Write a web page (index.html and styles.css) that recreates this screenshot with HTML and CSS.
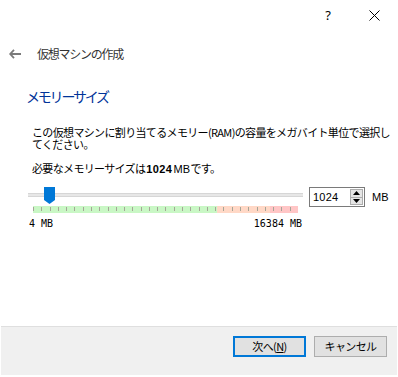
FILE: index.html
```html
<!DOCTYPE html>
<html lang="ja">
<head>
<meta charset="utf-8">
<title>仮想マシンの作成</title>
<link rel="stylesheet" href="styles.css">
</head>
<body>
<div class="window">
  <div class="titlebar">
    <button class="cap-btn help">?</button>
    <button class="cap-btn close" aria-label="閉じる">
      <svg width="11" height="11" viewBox="0 0 11 11"><path d="M0.5 0.5L10.5 10.5M10.5 0.5L0.5 10.5" stroke="#000" stroke-width="1" fill="none"/></svg>
    </button>
  </div>
  <div class="nav">
    <svg class="back" width="12" height="10" viewBox="0 0 12 10"><path d="M5 0.8L1.2 5L5 9.2M1.2 5H12" stroke="#7a7a7a" stroke-width="1.8" fill="none"/></svg>
    <span class="nav-title">仮想マシンの作成</span>
  </div>
  <main class="content">
    <h1 class="heading">メモリーサイズ</h1>
    <p class="desc">この仮想マシンに割り当てるメモリー(RAM)の容量をメガバイト単位で選択し<br>てください。</p>
    <p class="desc need">必要なメモリーサイズは<b>1024</b><span class="latin">MB</span>です。</p>
    <div class="slider-row">
      <div class="slider">
        <div class="track-wrap">
          <div class="track"></div>
          <svg class="thumb" width="11" height="17" viewBox="0 0 11 17"><path d="M0 0H11V13L5.5 17L0 13Z" fill="#0078d7"/></svg>
        </div>
        <div class="ticks"></div>
        <div class="scale-labels"><span>4 MB</span><span>16384 MB</span></div>
      </div>
      <div class="spin">
        <span class="spin-value">1024</span>
        <div class="spin-btns">
          <span class="spin-btn"><svg width="7" height="4" viewBox="0 0 7 4"><path d="M0 4L3.5 0L7 4Z" fill="#000"/></svg></span>
          <span class="spin-btn"><svg width="7" height="4" viewBox="0 0 7 4"><path d="M0 0L3.5 4L7 0Z" fill="#000"/></svg></span>
        </div>
      </div>
      <span class="unit">MB</span>
    </div>
  </main>
  <footer class="footer">
    <button class="btn primary">次へ(<u>N</u>)</button>
    <button class="btn">キャンセル</button>
  </footer>
</div>
</body>
</html>
```
FILE: styles.css
```css
html, body {
  margin: 0;
  padding: 0;
  background: #ffffff;
}
body {
  width: 398px;
  height: 377px;
  overflow: hidden;
  font-family: "Noto Sans CJK JP", "Noto Sans", sans-serif;
  color: #000;
}
.window {
  height: 377px;
  display: flex;
  flex-direction: column;
}
.titlebar {
  height: 30px;
  display: flex;
  justify-content: flex-end;
  padding-right: 1px;
}
.cap-btn {
  width: 46px;
  height: 30px;
  border: 0;
  background: transparent;
  padding: 0;
  margin: 0;
  display: flex;
  align-items: center;
  justify-content: center;
  font-family: "Noto Sans", sans-serif;
  font-size: 13px;
  color: #000;
}
.nav {
  margin-top: 14px;
  height: 20px;
  display: flex;
  align-items: center;
  padding-left: 9px;
}
.back {
  display: block;
  margin-right: 16px;
}
.nav-title {
  font-size: 12px;
  letter-spacing: -1.25px;
  color: #333;
  line-height: 20px;
}
.content {
  flex: 1;
}
.heading {
  margin: 22px 0 0 26px;
  font-size: 14px;
  font-weight: normal;
  letter-spacing: -2.2px;
  line-height: 20px;
  height: 20px;
  color: #003399;
}
.desc {
  margin: 20px 0 0 32px;
  font-size: 11px;
  line-height: 12px;
  letter-spacing: -0.65px;
}
.need {
  margin-top: 12px;
}
.need b {
  font-family: "Liberation Sans", sans-serif;
  font-weight: bold;
  letter-spacing: 0.4px;
  margin: 0 1px;
}
.need .latin {
  font-family: "Liberation Sans", sans-serif;
  letter-spacing: 0.3px;
}
.slider-row {
  margin-top: 12px;
  display: flex;
  align-items: flex-start;
  padding-left: 28px;
}
.slider {
  width: 275px;
}
.track-wrap {
  position: relative;
  height: 19px;
}
.track {
  position: relative;
  top: 6px;
  height: 2px;
  background: #e7e7e7;
  border: 1px solid #d6d6d6;
  border-left: 0;
  border-right: 0;
}
.thumb {
  position: absolute;
  left: 16px;
  top: 0;
  display: block;
}
.ticks {
  margin-left: 5px;
  width: 265px;
  height: 7px;
  background:
    repeating-linear-gradient(to right, #a5a597 0 1px, transparent 1px 8.28px) 0 1px / 266px 4px no-repeat,
    linear-gradient(to right, #c9f7c5 0 184px, #ffd8c6 184px 237px, #ffc6c6 237px);
}
.scale-labels {
  margin: 5px 0 0 1px;
  width: 273px;
  display: flex;
  justify-content: space-between;
  font-family: "DejaVu Sans Mono", monospace;
  font-size: 10px;
  line-height: 12px;
}
.spin {
  margin-left: 6px;
  width: 56px;
  height: 20px;
  box-sizing: border-box;
  border: 1px solid #7a7a7a;
  display: flex;
  align-items: center;
  justify-content: space-between;
  padding: 0 1px 0 3px;
}
.spin-value {
  font-family: "Liberation Sans", sans-serif;
  font-size: 11px;
  letter-spacing: 0.2px;
}
.spin-btns {
  display: flex;
  flex-direction: column;
  width: 13px;
  height: 16px;
  border: 1px solid #adadad;
  box-sizing: border-box;
  background: #e5e5e5;
}
.spin-btn {
  flex: 1;
  display: flex;
  align-items: center;
  justify-content: center;
}
.spin-btn + .spin-btn {
  border-top: 1px solid #adadad;
}
.unit {
  margin-left: 7px;
  font-family: "Liberation Sans", sans-serif;
  font-size: 11px;
  line-height: 20px;
}
.footer {
  margin: 0 1px 2px 1px;
  height: 39px;
  border-top: 1px solid #dfdfdf;
  background: #f0f0f0;
  display: flex;
  justify-content: flex-end;
  align-items: flex-start;
  gap: 8px;
  padding: 9px 10px 0 0;
}
.btn {
  width: 73px;
  height: 21px;
  margin: 0;
  padding: 0;
  box-sizing: border-box;
  border: 1px solid #adadad;
  background: #e1e1e1;
  font-family: "Noto Sans CJK JP", sans-serif;
  font-size: 11px;
  letter-spacing: -0.6px;
  color: #000;
  line-height: 17px;
}
.btn.primary {
  border: 2px solid #0078d7;
}
.btn u {
  text-decoration-thickness: 1px;
}
```
